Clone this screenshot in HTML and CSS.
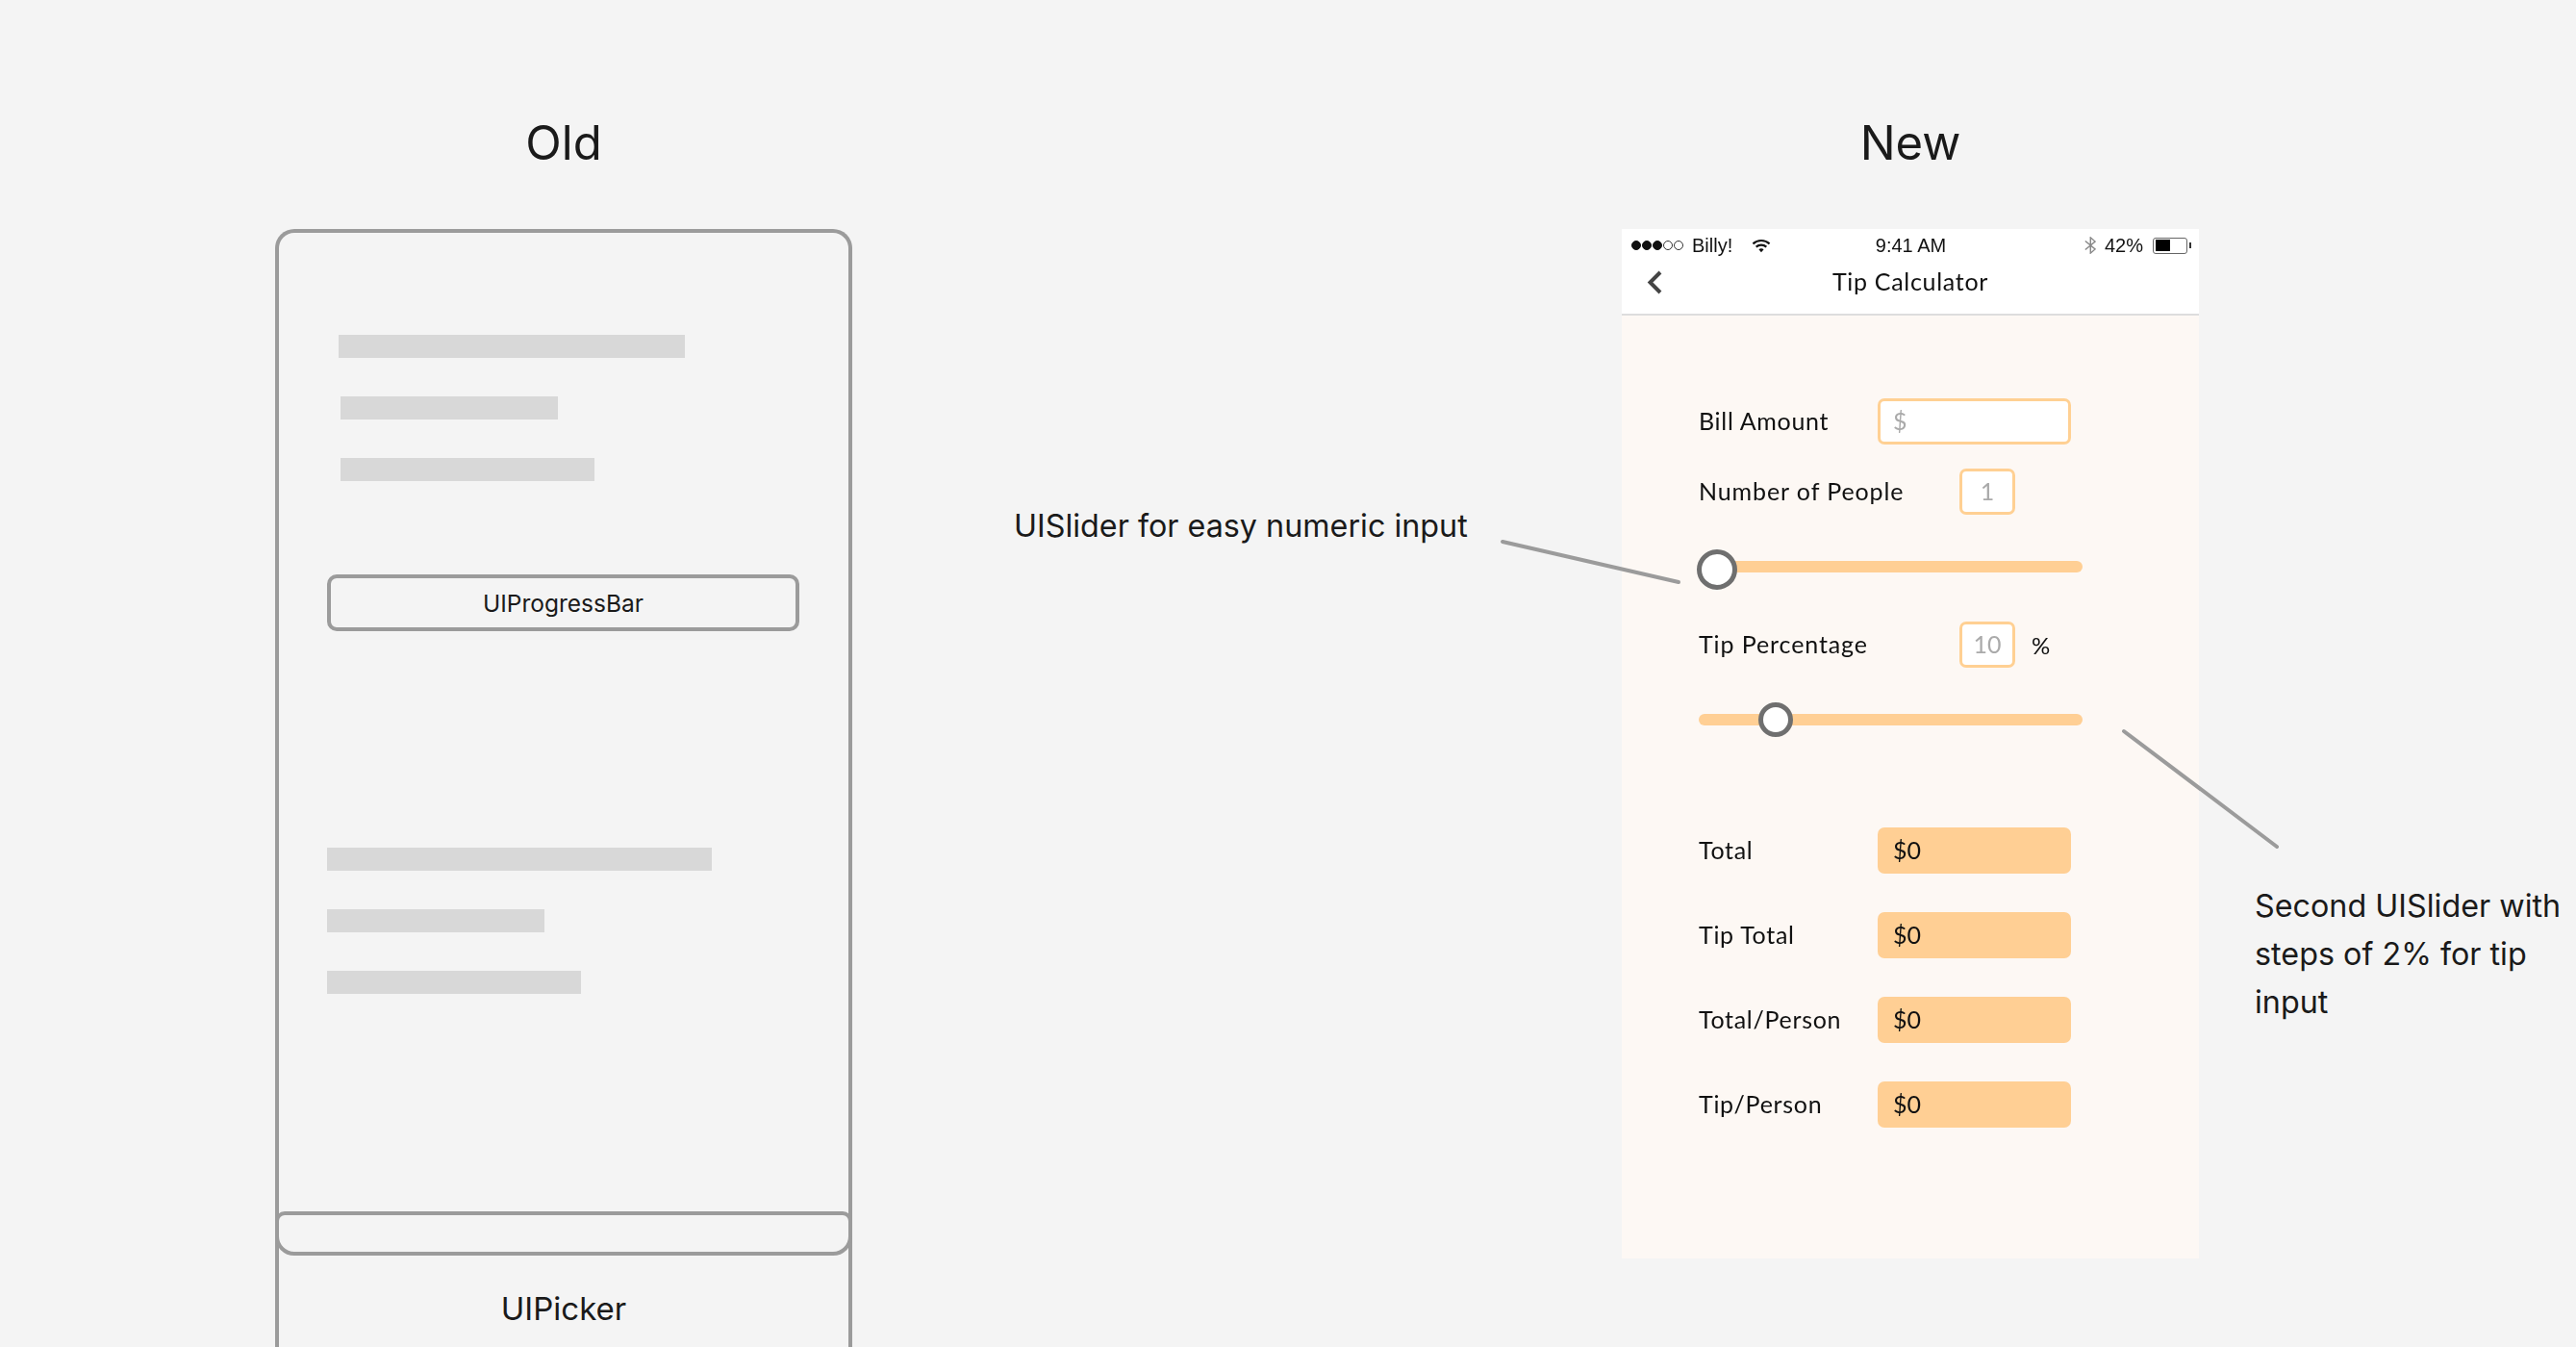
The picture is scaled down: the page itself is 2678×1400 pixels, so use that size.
FILE: index.html
```html
<!DOCTYPE html>
<html>

<head>
	<meta charset="utf-8">
	<title>Old vs New</title>
	<link rel="stylesheet" href="styles.css">
</head>

<body>
	<div class="page">

		<!-- old wireframe -->
		<section class="col">
			<h2 class="col-title">Old</h2>
			<div class="frame">
				<div class="bars bars-top">
					<div class="bar bar-a"></div>
					<div class="bar bar-b"></div>
					<div class="bar bar-c"></div>
				</div>
				<div class="progress">UIProgressBar</div>
				<div class="bars bars-bottom">
					<div class="bar bar-d"></div>
					<div class="bar bar-b"></div>
					<div class="bar bar-c"></div>
				</div>
				<div class="picker-bar"></div>
				<div class="picker-label">UIPicker</div>
			</div>
		</section>

		<!-- new screen -->
		<section class="col">
			<h2 class="col-title">New</h2>
			<div class="phone">
				<div class="header">
					<div class="status">
						<div class="status-left">
							<span class="dots">
								<i class="dot on"></i><i class="dot on"></i><i class="dot on"></i><i class="dot"></i><i class="dot"></i>
							</span>
							<span class="carrier">Billy!</span>
							<svg class="wifi" width="20" height="15" viewBox="0 0 18 14">
								<path d="M1 5 C5.5 0.8 12.5 0.8 17 5" fill="none" stroke="#111" stroke-width="2" />
								<path d="M4 8 C6.8 5.6 11.2 5.6 14 8" fill="none" stroke="#111" stroke-width="2" />
								<path d="M6.6 10.4 L9 13.4 L11.4 10.4 C10 9.2 8 9.2 6.6 10.4 Z" fill="#111" />
							</svg>
						</div>
						<div class="status-time">9:41 AM</div>
						<div class="status-right">
							<svg class="bt" width="12" height="18" viewBox="0.8 0.4 9.9 16.2" preserveAspectRatio="none">
								<path d="M1.5 4.5 L10 12 L6 15.8 V1.2 L10 5 L1.5 12.5" fill="none" stroke="#888" stroke-width="1.2" />
							</svg>
							<span class="battery-pct">42%</span>
							<span class="battery"><i class="battery-fill"></i></span>
						</div>
					</div>
					<div class="nav">
						<svg class="back" width="16" height="25" viewBox="0 0 16 25">
							<path d="M14 2 L3.5 12.5 L14 23" fill="none" stroke="#444" stroke-width="4" />
						</svg>
						<div class="nav-title">Tip Calculator</div>
						<div></div>
					</div>
				</div>

				<div class="form">
					<div class="row">
						<label class="label">Bill Amount</label>
						<div class="input input-wide">$</div>
					</div>
					<div class="row row-people">
						<label class="label label-long">Number of People</label>
						<div class="input input-small">1</div>
					</div>
					<div class="slider slider-one">
						<div class="track"></div>
						<div class="thumb thumb-one"></div>
					</div>
					<div class="row row-tip">
						<label class="label label-long">Tip Percentage</label>
						<div class="input input-small">10</div>
						<span class="percent">%</span>
					</div>
					<div class="slider slider-two">
						<div class="track"></div>
						<div class="thumb thumb-two"></div>
					</div>
					<div class="results">
						<div class="row">
							<label class="label">Total</label>
							<div class="output">$0</div>
						</div>
						<div class="row">
							<label class="label">Tip Total</label>
							<div class="output">$0</div>
						</div>
						<div class="row">
							<label class="label">Total/Person</label>
							<div class="output">$0</div>
						</div>
						<div class="row">
							<label class="label">Tip/Person</label>
							<div class="output">$0</div>
						</div>
					</div>
				</div>
			</div>
		</section>

		<!-- annotations -->
		<svg class="leaders" width="2678" height="1400" viewBox="0 0 2678 1400">
			<line x1="1562" y1="563" x2="1745" y2="605" />
			<line x1="2208" y1="760" x2="2367" y2="880" />
		</svg>
		<p class="note note-one">UISlider for easy numeric input</p>
		<p class="note note-two">Second UISlider with<br>steps of 2% for tip<br>input</p>
	</div>
</body>

</html>
```

FILE: styles.css
```css
body {
	margin: 0;
	background-color: #f4f4f4;
	font-family: Inter, "Liberation Sans", sans-serif;
	color: #1a1a1a;
}

/* whole artboard */
.page {
	position: relative;
	display: flex;
	gap: 800px;
	width: 2678px;
	height: 1400px;
	padding: 120px 0 0 286px;
	box-sizing: border-box;
	overflow: hidden;
}

.col {
	width: 600px;
	flex: none;
}

.col-title {
	margin: 0 0 60px;
	font-size: 49px;
	font-weight: 400;
	line-height: 58px;
	text-align: center;
}

/* old wireframe */
.frame {
	height: 1300px;
	border: 4px solid #9b9b9b;
	border-bottom: none;
	border-radius: 20px 20px 0 0;
	box-sizing: border-box;
}

.bars {
	display: flex;
	flex-direction: column;
	gap: 40px;
}

.bars-top {
	padding: 106px 0 0 64px;
}

.bars-bottom {
	margin-top: 225px;
	padding-left: 50px;
}

.bar {
	height: 24px;
	background-color: #d8d8d8;
}

.bar-a {
	width: 360px;
	margin-left: -2px;
}

.bar-b {
	width: 226px;
}

.bar-c {
	width: 264px;
}

.bar-d {
	width: 400px;
}

.progress {
	width: 491px;
	height: 59px;
	margin: 97px 0 0 50px;
	border: 4px solid #9b9b9b;
	border-radius: 10px;
	box-sizing: border-box;
	font-size: 24.5px;
	line-height: 53px;
	text-align: center;
}

.picker-bar {
	height: 46px;
	margin: 226px -4px 0;
	border: 4px solid #9b9b9b;
	border-radius: 10px 10px 20px 20px;
	box-sizing: border-box;
}

.picker-label {
	margin-top: 35px;
	font-size: 33px;
	line-height: 40px;
	text-align: center;
}

/* new screen */
.phone {
	height: 1070px;
	background-color: #fdf8f4;
	font-family: Lato, "Liberation Sans", sans-serif;
	color: #111;
	filter: blur(0.4px);
}

.header {
	height: 88px;
	background-color: #fff;
	border-bottom: 2px solid #ddd;
}

.status {
	display: grid;
	grid-template-columns: 1fr auto 1fr;
	align-items: center;
	height: 34px;
	padding: 0 9px 0 10px;
	font-family: "Liberation Sans", sans-serif;
	font-size: 20px;
}

.status-left,
.status-right {
	display: flex;
	align-items: center;
}

.status-right {
	justify-content: flex-end;
}

.dots {
	display: flex;
	gap: 1px;
}

.dot {
	width: 10px;
	height: 10px;
	border: 1px solid #333;
	border-radius: 50%;
	box-sizing: border-box;
}

.dot.on {
	background-color: #111;
	border-color: #111;
}

.carrier {
	margin-left: 9px;
}

.wifi {
	margin-left: 20px;
}

.battery-pct {
	margin: 0 10px 0 9px;
}

.battery {
	position: relative;
	display: block;
	width: 36px;
	height: 17px;
	border: 1.5px solid #666;
	border-radius: 3px;
	box-sizing: border-box;
	padding: 1.5px;
	margin-right: 3px;
}

.battery::after {
	content: "";
	position: absolute;
	right: -4.5px;
	top: 4px;
	width: 2px;
	height: 6px;
	background-color: #333;
}

.battery-fill {
	display: block;
	width: 15px;
	height: 100%;
	background-color: #000;
}

.nav {
	display: grid;
	grid-template-columns: 1fr auto 1fr;
	align-items: center;
	height: 42px;
	padding: 0 26px;
}

.nav-title {
	font-size: 25px;
	letter-spacing: 0.7px;
	line-height: 38px;
	margin-top: -3px;
}

.form {
	padding: 86px 0 0 80px;
}

.row {
	display: flex;
	align-items: center;
}

.label {
	width: 186px;
	flex: none;
	font-size: 25px;
	letter-spacing: 0.7px;
	line-height: 30px;
	margin-top: -3px;
}

.label-long {
	width: 271px;
	letter-spacing: 0.9px;
}

.input {
	height: 48px;
	border: 3px solid #ffd093;
	border-radius: 7px;
	background-color: #fff;
	box-sizing: border-box;
	color: #aaa;
	font-size: 25px;
	line-height: 41px;
}

.input-wide {
	width: 201px;
	padding-left: 13px;
}

.input-small {
	width: 58px;
	text-align: center;
}

.row-people {
	margin-top: 25px;
}

.row-tip {
	margin-top: 33px;
}

.percent {
	margin-left: 17px;
	font-size: 24px;
}

.slider {
	position: relative;
	width: 399px;
}

.slider-one {
	height: 42px;
	margin-top: 36px;
}

.slider-two {
	height: 36px;
	margin-top: 36px;
}

.track {
	height: 12px;
	position: relative;
	top: 12px;
	border-radius: 6px;
	background-color: #ffcf94;
}

.thumb {
	position: absolute;
	top: 0;
	border: 5px solid #6f6f6f;
	border-radius: 50%;
	background-color: #fff;
	box-sizing: border-box;
}

.thumb-one {
	left: -2px;
	width: 42px;
	height: 42px;
}

.thumb-two {
	left: 62px;
	width: 36px;
	height: 36px;
}

.results {
	display: flex;
	flex-direction: column;
	gap: 40px;
	margin-top: 94px;
}

.output {
	width: 201px;
	height: 48px;
	padding-left: 16px;
	border-radius: 7px;
	background-color: #ffcf94;
	box-sizing: border-box;
	font-size: 25px;
	line-height: 46px;
}

/* annotations */
.leaders {
	position: absolute;
	top: 0;
	left: 0;
}

.leaders line {
	stroke: #9b9b9b;
	stroke-width: 4;
	stroke-linecap: round;
}

.note {
	position: absolute;
	margin: 0;
	font-size: 32.3px;
	line-height: 50px;
}

.note-one {
	left: 1054px;
	top: 522px;
}

.note-two {
	left: 2344px;
	top: 917px;
}
```
